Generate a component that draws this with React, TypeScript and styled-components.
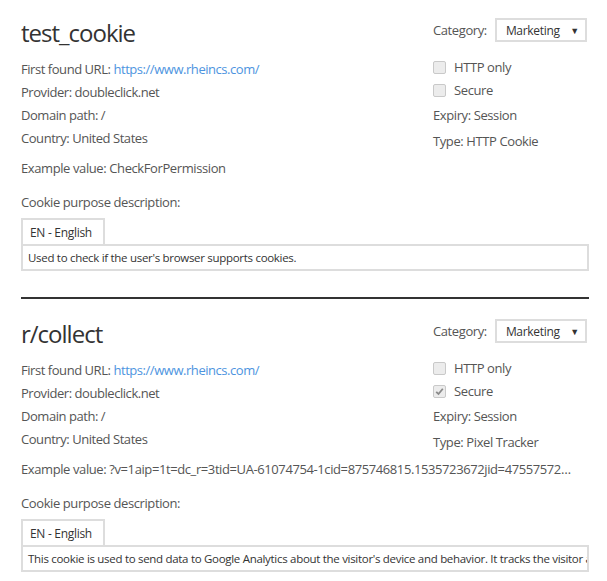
import React from "react";
import styled, { createGlobalStyle } from "styled-components";

const Global = createGlobalStyle`
  html, body { margin: 0; padding: 0; background: #fff; }
  body { font-family: "Open Sans", "Noto Sans", Arial, sans-serif; color: #555; }
`;

const Page = styled.div`
  padding: 0 18px 0 21px;
  width: 607px;
  box-sizing: border-box;
`;

const Section = styled.section<{ $first?: boolean }>`
  padding: ${(p) => (p.$first ? "17px" : "19px")} 0 26px;
`;

const Divider = styled.hr`
  margin: 0;
  border: 0;
  height: 2px;
  background: #333;
`;

const Top = styled.div`
  display: grid;
  grid-template-columns: 1fr 156px;
`;

const Left = styled.div`
  display: flex;
  flex-direction: column;
`;

const Title = styled.h2`
  margin: 0 0 9px;
  font-size: 24px;
  line-height: 32px;
  font-weight: 400;
  color: #333;
  letter-spacing: -1px;
`;

const Field = styled.div`
  font-size: 13px;
  line-height: 23px;
  white-space: nowrap;
  letter-spacing: -0.45px;
`;

const Link = styled.a`
  color: #4d94e0;
  text-decoration: none;
`;

const Right = styled.div`
  display: flex;
  flex-direction: column;
  padding-top: 1px;
`;

const CategoryRow = styled.div`
  display: flex;
  align-items: center;
  gap: 8px;
  height: 24px;
  margin-bottom: 14px;
  font-size: 13px;
  letter-spacing: -0.4px;
`;

const Select = styled.div`
  box-sizing: border-box;
  width: 92px;
  height: 24px;
  border: 2px solid #ddd;
  display: flex;
  align-items: center;
  justify-content: space-between;
  padding: 0 6px 0 9px;
  font-size: 12px;
  color: #333;
  letter-spacing: -0.3px;
`;

const Arrow = styled.span`
  font-size: 9px;
  color: #333;
`;

const CheckRow = styled.label`
  display: flex;
  align-items: center;
  gap: 8px;
  font-size: 13px;
  line-height: 23px;
  letter-spacing: -0.4px;
`;

const Box = styled.span`
  box-sizing: border-box;
  width: 13px;
  height: 13px;
  border: 1px solid #c9c9c9;
  border-radius: 2px;
  background: #ececec;
  display: inline-flex;
  align-items: center;
  justify-content: center;
`;

const Meta = styled.div`
  font-size: 13px;
  line-height: 26px;
  letter-spacing: -0.4px;
  white-space: nowrap;
`;

const Example = styled.div`
  margin: 3px 12px 0 0;
  font-size: 13px;
  line-height: 23px;
  white-space: nowrap;
  overflow: hidden;
  text-overflow: ellipsis;
  letter-spacing: -0.4px;
`;

const DescLabel = styled.div`
  margin-top: 11px;
  font-size: 13px;
  line-height: 23px;
  letter-spacing: -0.4px;
`;

const Tabs = styled.div`
  margin-top: 4px;
  display: flex;
`;

const Tab = styled.div`
  box-sizing: border-box;
  width: 84px;
  height: 26px;
  border: 2px solid #ddd;
  border-bottom: 0;
  padding-left: 7px;
  font-size: 12px;
  line-height: 25px;
  color: #333;
  letter-spacing: -0.3px;
`;

const Content = styled.div`
  box-sizing: border-box;
  border: 2px solid #ddd;
  height: 27px;
  padding: 0 5px;
  font-size: 11.5px;
  line-height: 23px;
  color: #333;
  white-space: nowrap;
  overflow: hidden;
  letter-spacing: -0.3px;
`;

type Cookie = {
  name: string;
  type: string;
  secure: boolean;
  example: string;
  desc: string;
};

const cookies: Cookie[] = [
  {
    name: "test_cookie",
    type: "HTTP Cookie",
    secure: false,
    example: "CheckForPermission",
    desc: "Used to check if the user's browser supports cookies.",
  },
  {
    name: "r/collect",
    type: "Pixel Tracker",
    secure: true,
    example:
      "?v=1aip=1t=dc_r=3tid=UA-61074754-1cid=875746815.1535723672jid=475575726_gid=1012345678z=1234567890",
    desc:
      "This cookie is used to send data to Google Analytics about the visitor's device and behavior. It tracks the visitor across devices and marketing channels.",
  },
];

const Check = ({ checked }: { checked: boolean }) => (
  <Box>
    {checked && (
      <svg width="9" height="9" viewBox="0 0 9 9">
        <path d="M1.2 4.8 L3.5 7 L7.8 1.8" fill="none" stroke="#8a8a8a" strokeWidth="1.8" />
      </svg>
    )}
  </Box>
);

const CookieBlock = ({ c, first }: { c: Cookie; first?: boolean }) => (
  <Section $first={first}>
    <Top>
      <Left>
        <Title>{c.name}</Title>
        <Field>
          First found URL: <Link href="#">https://www.rheincs.com/</Link>
        </Field>
        <Field>Provider: doubleclick.net</Field>
        <Field>Domain path: /</Field>
        <Field>Country: United States</Field>
      </Left>
      <Right>
        <CategoryRow>
          Category:
          <Select>
            Marketing<Arrow>▼</Arrow>
          </Select>
        </CategoryRow>
        <CheckRow>
          <Check checked={false} /> HTTP only
        </CheckRow>
        <CheckRow>
          <Check checked={c.secure} /> Secure
        </CheckRow>
        <Meta>Expiry: Session</Meta>
        <Meta>Type: {c.type}</Meta>
      </Right>
    </Top>
    <Example>Example value: {c.example}</Example>
    <DescLabel>Cookie purpose description:</DescLabel>
    <Tabs>
      <Tab>EN - English</Tab>
    </Tabs>
    <Content>{c.desc}</Content>
  </Section>
);

export default function App() {
  return (
    <Page>
      <Global />
      <CookieBlock c={cookies[0]} first />
      <Divider />
      <CookieBlock c={cookies[1]} />
    </Page>
  );
}
